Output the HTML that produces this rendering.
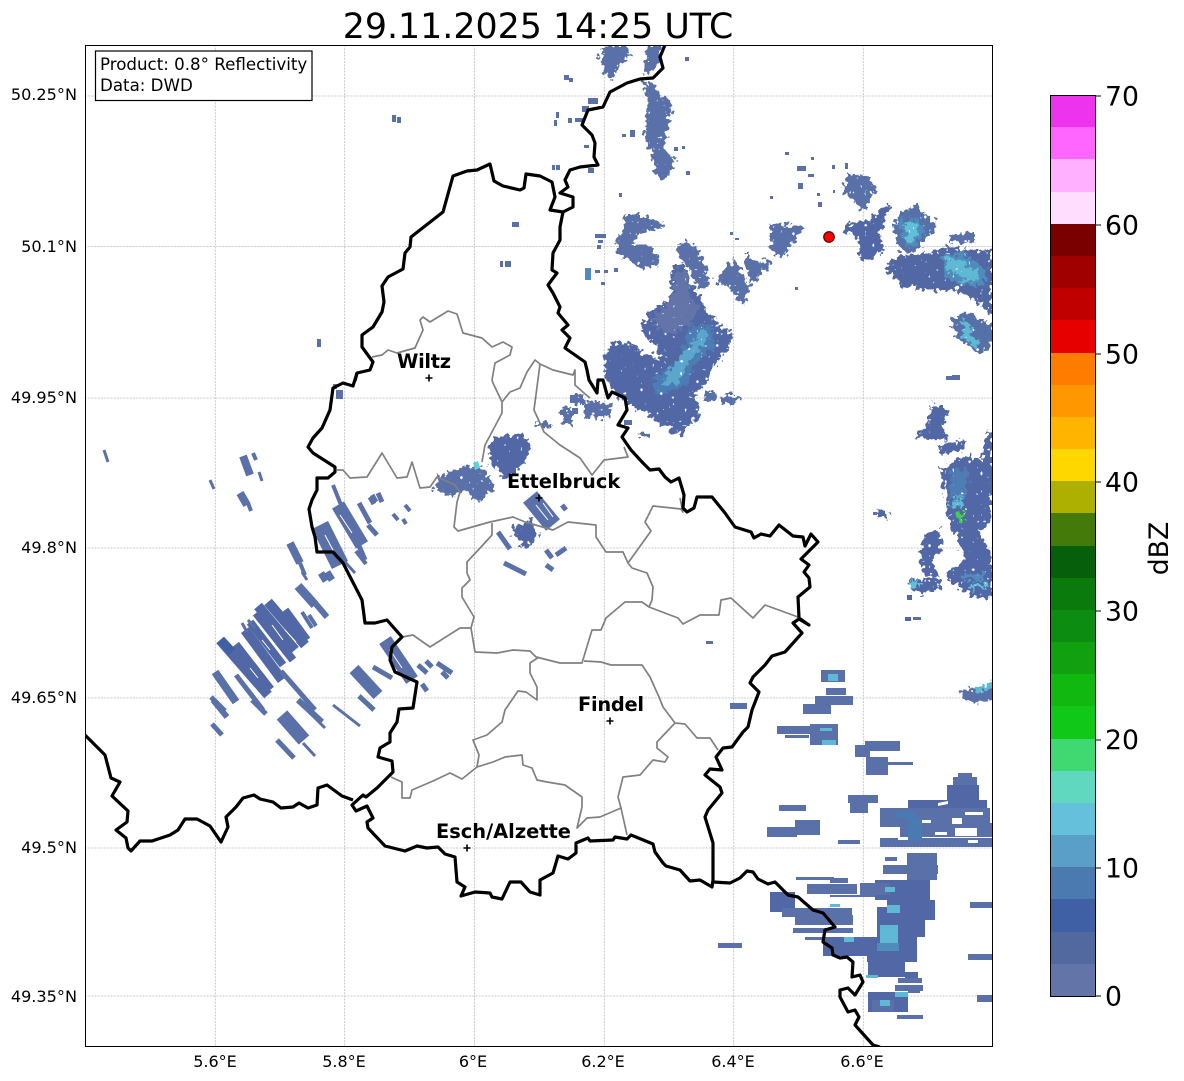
<!DOCTYPE html>
<html><head><meta charset="utf-8"><title>Radar</title>
<style>html,body{margin:0;padding:0;background:#fff}svg{display:block}text{font-family:"DejaVu Sans","Liberation Sans",sans-serif;fill:#000}</style>
</head><body>
<svg width="1184" height="1081" viewBox="0 0 1184 1081" xmlns="http://www.w3.org/2000/svg">
<defs>
<clipPath id="ax"><rect x="85" y="45" width="907" height="1001"/></clipPath>
<filter id="j" filterUnits="userSpaceOnUse" x="0" y="0" width="1184" height="1081" color-interpolation-filters="sRGB">
<feTurbulence type="fractalNoise" baseFrequency="0.2" numOctaves="2" seed="4" result="n"/>
<feDisplacementMap in="SourceGraphic" in2="n" scale="14" xChannelSelector="R" yChannelSelector="G" result="d"/>
<feTurbulence type="fractalNoise" baseFrequency="0.25" numOctaves="1" seed="9"/>
<feColorMatrix type="matrix" values="0 0 0 0 0 0 0 0 0 0 0 0 0 0 0 16 0 0 0 -3.8" result="m"/>
<feComposite in="d" in2="m" operator="in"/>
</filter>
</defs>
<rect width="1184" height="1081" fill="#fff"/>
<text x="538" y="38" font-size="34.8" text-anchor="middle">29.11.2025 14:25 UTC</text>
<g clip-path="url(#ax)">
<!-- grid -->
<g stroke="#bbb" stroke-width="0.8" stroke-dasharray="2 1.2" fill="none">
<path d="M215.3 45V1046M344.7 45V1046M474.5 45V1046M604.3 45V1046M733.7 45V1046M863.3 45V1046"/>
<path d="M85 96H992M85 246.5H992M85 398H992M85 548H992M85 698H992M85 848H992M85 996H992"/>
</g>
<!-- north-east jagged rain -->
<g filter="url(#j)">
<g fill="#5a70a8">
<path d="M600 47H628L630 55 618 65 612 80 605 75 600 62Z"/>
<path d="M648 45H662L660 60 652 72 643 75Z"/>
<path d="M643 80L655 85 660 95 673 103 668 125 665 150 675 160 672 172 663 180 656 175 650 150 645 135 648 110Z"/>
<path d="M625 212L640 215 665 225 650 232 638 232 633 245 650 245 660 262 645 270 620 255 615 245 622 230Z"/>
<path d="M733 258L750 285 745 305 738 300 730 288 715 282 718 278 730 262Z"/>
<path d="M745 252L755 262 772 260 757 283 750 280 745 265Z"/>
<path d="M770 223L790 225 802 228 795 240 785 255 775 255 770 245Z"/>
<path d="M847 172L870 178 876 190 868 205 860 212 850 195 843 195Z"/>
<path d="M683 240L695 245 705 268 710 285 700 290 690 270 675 250Z"/>
<path d="M704 392h12v10h-12zM722 395h16v9h-16zM585 402h26v16h-26zM562 408h10v16h-10zM574 394h10v10h-10zM536 423h14v4h-14zM640 433h10v5h-10z"/>
<path d="M437 478L453 470 470 465 465 490 452 497 435 490Z"/>
<path d="M470 465L485 470 495 485 480 503 465 490Z"/>
</g>
<path fill="#5268a6" d="M490 440L520 432 533 445 520 470 505 478 490 465Z"/>
<path fill="#5268a6" d="M515 525L530 520 540 535 525 548 513 535Z"/>
<path fill="#5268a6" d="M672 265H685L690 285 700 295 705 310 718 325 730 330 732 345 715 365 705 385 695 395 700 415 680 435 660 425 640 410 620 400 605 375 603 355 615 343 635 345 645 355 660 362 655 345 640 330 650 312 670 298Z"/>
<path fill="#6274a8" d="M675 270L685 272 690 295 700 310 690 325 665 335 650 320 672 300Z"/>
<path fill="#4b7cb4" d="M690 325L712 325 715 345 695 365 685 385 660 395 650 385 665 370 680 360Z"/>
<path fill="#5aa6cc" d="M703 328L708 340 688 362 676 384 660 388 668 372 685 352Z"/>
<path fill="#5268a6" d="M845 225L870 220 880 208 893 205 885 220 880 235 885 250 870 260 858 258 860 240 845 232Z"/>
<path fill="#5670a8" d="M893 218L915 205 925 215 938 225 925 240 915 252 900 250 895 235Z"/>
<path fill="#4f8cbc" d="M897 222L918 218 925 233 913 248 903 240Z"/>
<path fill="#5fc0d8" d="M905 222L915 222 918 235 910 243 906 235Z"/>
<path fill="#5268a4" d="M885 268L900 255 920 255 945 247 965 250 992 250V317L975 300 955 290 925 290 900 285Z"/>
<path fill="#4f8cbc" d="M940 256L962 252 985 270 985 285 960 285 945 275Z"/>
<path fill="#5fb8d4" d="M945 258L960 260 978 272 975 282 960 278 948 268Z"/>
<path fill="#5670a8" d="M950 322L965 310 992 325V345L978 355 960 340Z"/>
<path fill="#5fb8d4" d="M962 318L972 324 968 335 980 340 976 350 964 338Z"/>
<path fill="#5a70a8" d="M950 235L975 233V242L950 243Z"/>
<!-- right side -->
<g fill="#5268a6">
<path d="M930 405L950 410 942 425 948 440 915 438 930 420Z"/>
<path d="M938 445L966 440 962 452 940 453Z"/>
<path d="M940 470L965 455 982 460 985 435 992 432V520L980 530 992 560V598L970 595 955 585 945 575 965 560 955 535 948 515 945 490Z"/>
<path d="M923 535L940 530 942 550 930 560 940 578 925 575 920 560Z"/>
<path d="M907 580L940 577 940 590 915 593Z"/>
</g>
<path fill="#5fb8d4" d="M950 500h12v8h-12zM956 495h10v4h-10z"/>
<path fill="#4f8cbc" d="M950 470h18v28h-18z" opacity=".6"/>
<path fill="#3fcf4f" d="M957 512h8v8h-8z"/>
<path fill="#5fc0d8" d="M910 581h10v6h-10zM972 583h14v6h-14z"/>
<path fill="#4f8cbc" d="M963 574h22v6h-22z"/>
<path fill="#5268a6" d="M877 510h11v7h-11z"/>
<path fill="#5a70a8" d="M960 690L975 688 992 683V700L975 703 962 698Z"/>
<path fill="#5fb8d4" d="M975 688L992 682V688L978 692Z"/>
</g>
<!-- specks -->
<g fill="#5a70a8">
<rect x="392" y="115" width="4" height="7"/><rect x="397" y="117" width="4" height="6"/><rect x="512" y="222" width="7" height="5"/><rect x="500" y="261" width="3" height="6"/><rect x="505" y="261" width="6" height="6"/><rect x="317" y="339" width="4" height="8"/>
<rect x="564" y="75" width="5" height="5"/><rect x="569" y="78" width="4" height="4"/><rect x="685" y="57" width="4" height="4"/><rect x="556" y="112" width="3" height="6"/><rect x="554" y="120" width="3" height="6"/><rect x="568" y="118" width="4" height="5"/><rect x="575" y="118" width="8" height="4"/><rect x="582" y="106" width="7" height="6"/><rect x="588" y="98" width="10" height="6"/><rect x="584" y="145" width="5" height="3"/><rect x="552" y="165" width="3" height="5"/><rect x="556" y="165" width="4" height="5"/><rect x="588" y="168" width="6" height="5"/><rect x="619" y="193" width="3" height="4"/><rect x="630" y="130" width="5" height="7"/><rect x="622" y="134" width="4" height="3"/><rect x="674" y="147" width="4" height="4"/><rect x="682" y="146" width="3" height="3"/><rect x="686" y="171" width="4" height="4"/><rect x="595" y="234" width="11" height="4"/><rect x="598" y="240" width="5" height="3"/><rect x="597" y="245" width="4" height="4"/><rect x="595" y="270" width="5" height="3"/><rect x="604" y="270" width="4" height="3"/><rect x="614" y="268" width="4" height="4"/><rect x="601" y="282" width="4" height="3"/>
<rect x="785" y="152" width="4" height="3"/><rect x="811" y="157" width="3" height="3"/><rect x="797" y="166" width="9" height="5"/><rect x="808" y="174" width="6" height="3"/><rect x="798" y="183" width="5" height="6"/><rect x="817" y="193" width="3" height="3"/><rect x="818" y="202" width="4" height="5"/><rect x="770" y="196" width="3" height="3"/><rect x="795" y="287" width="3" height="3"/><rect x="832" y="165" width="3" height="4"/><rect x="845" y="163" width="3" height="6"/><rect x="833" y="190" width="2" height="3"/><rect x="730" y="232" width="3" height="3"/><rect x="735" y="238" width="4" height="2"/><rect x="946" y="376" width="6" height="4"/><rect x="952" y="375" width="8" height="5"/><rect x="907" y="595" width="5" height="5" fill="#5268a6"/><rect x="913" y="617" width="8" height="3"/><rect x="905" y="617" width="6" height="4" fill="#5268a6"/><rect x="706" y="641" width="7" height="3"/><rect x="873" y="512" width="4" height="3"/><rect x="333" y="384" width="4" height="5"/><rect x="336" y="390" width="7" height="9"/>
</g>
<rect x="585" y="268" width="6" height="12" fill="#4f8cbc"/>
<!-- west streaks -->
<g stroke="#5a70a8" fill="none" stroke-linecap="butt">
<path stroke-width="3" d="M104 450L108 462M210 480L214 489M259 472L262 481"/>
<path stroke-width="8" d="M243 456L250 475M240 493L247 505"/>
<path stroke-width="4" d="M253 453L256 460M248 503L251 511M333 485L345 515M356 551L366 564M405 505L410 511M393 514L398 520M403 519L406 524"/>
<path stroke-width="14" d="M338 505L362 545"/>
<path stroke-width="5" d="M359 503L370 523M368 525L377 535M346 515L365 560M372 495L376 502M378 493L382 502M370 497L374 504"/>
<path stroke-width="18" d="M320 525L340 565"/>
<path stroke-width="3" d="M345 562L355 573M302 572L307 580"/>
<path stroke-width="8" d="M290 543L300 563"/>
<path stroke-width="4" d="M300 563L305 575"/>
<path stroke-width="7" d="M321 573L326 581M327 572L332 580"/>
<path stroke-width="9" d="M298 586L315 605"/>
<path stroke-width="6" d="M315 603L327 617"/>
<path stroke-width="4" d="M302 612L312 628M309 615L316 626"/>
<!-- big west cluster as parallel streaks -->
<path stroke-width="10" stroke="#5268a6" d="M268 602L305 645M258 606L295 650M220 640L268 695M235 645L270 690M245 630L282 680"/>
<path stroke-width="8" stroke="#5268a6" d="M285 610L307 640M256 613L293 660M250 622L283 665"/>
<path stroke-width="3" d="M242 623L247 632M248 620L255 628"/>
<path stroke-width="8" d="M215 672L236 702"/>
<path stroke-width="5" d="M236 675L263 710M281 671L315 710M211 697L225 711"/>
<path stroke-width="12" d="M354 669L378 695"/>
<path stroke-width="5" d="M373 667L392 678M359 696L374 710M252 700L266 714M277 740L294 758M422 684L427 691M418 665L427 673M426 661L432 667M437 663L452 673M442 672L448 678M212 724L222 735"/>
<path stroke-width="14" d="M385 640L412 680"/>
<path stroke-width="6" d="M213 700L227 717"/>
<path stroke-width="14" d="M282 715L304 740"/>
<path stroke-width="3" d="M303 743L315 756M307 710L325 728M333 705L360 726"/>
<path stroke-width="6" d="M298 700L322 722"/>
<path stroke-width="5" d="M498 532L510 549M546 550L552 558M556 555L566 548M504 563L526 574M546 565L553 570M562 505L566 510"/>
<path stroke-width="18" d="M530 497L553 525"/>
<path stroke="#4060a6" stroke-width="9" d="M221 640L232 652"/>
<path stroke="#fff" stroke-width="1" d="M272 625L283 640M262 640L270 650M250 668L258 678M285 630L296 642M340 515L352 533M325 535L334 552M536 505L548 520M543 503L553 517M390 650L402 668"/>
</g>
<g fill="#5a70a8">
<path d="M624 420h8v5h-8zM570 395h8v8h-8zM572 408h6v6h-6zM560 410h6v5h-6z"/>
</g>
<path fill="#5fd0d8" d="M473 463l5-2 2 7-5 2z"/>
<!-- south-east bands -->
<g fill="#5a70a8">
<rect x="730" y="703" width="17" height="6"/><rect x="821" y="670" width="24" height="12"/><rect x="826" y="688" width="20" height="7"/><rect x="803" y="704" width="28" height="10"/><rect x="815" y="696" width="38" height="9"/>
<rect x="777" y="726" width="40" height="8"/><rect x="785" y="735" width="24" height="3"/><rect x="810" y="724" width="28" height="21"/>
<rect x="855" y="745" width="15" height="12"/><rect x="865" y="741" width="35" height="10"/><rect x="866" y="757" width="22" height="18"/><rect x="885" y="762" width="28" height="3"/>
<rect x="779" y="805" width="27" height="6"/><rect x="767" y="827" width="30" height="10"/><rect x="795" y="820" width="25" height="15"/>
<rect x="838" y="840" width="22" height="4"/><rect x="848" y="795" width="30" height="8"/><rect x="850" y="803" width="18" height="10"/>
<rect x="953" y="777" width="24" height="10"/><rect x="947" y="785" width="32" height="18" fill="#5268a6"/><rect x="908" y="800" width="79" height="13" fill="#5268a6"/><rect x="880" y="808" width="110" height="19"/><rect x="900" y="823" width="92" height="14"/><rect x="880" y="838" width="112" height="9"/><rect x="958" y="773" width="14" height="5"/>
<path fill="#fff" d="M938 803l10-2v3l-10 2zM952 818h10v6h-10zM955 828h22v8h-22zM968 840h10v3h-10zM920 820h11v3h-11zM935 832h12v3h-12zM965 812h18v3h-18zM898 838h14v2h-14z"/>
<path fill="#4a7ab2" d="M908 818h14v22h-14zM895 812h20v6h-20z"/>
<rect x="907" y="853" width="30" height="27"/><rect x="883" y="865" width="55" height="9"/><rect x="885" y="857" width="12" height="4"/>
<rect x="796" y="877" width="38" height="3"/><rect x="807" y="884" width="50" height="10"/><rect x="830" y="878" width="18" height="5"/>
<g fill="#5268a6"><rect x="875" y="880" width="55" height="20"/><rect x="887" y="900" width="48" height="20"/><rect x="877" y="907" width="48" height="30"/><rect x="867" y="937" width="50" height="25"/><rect x="868" y="962" width="37" height="15"/><rect x="905" y="972" width="13" height="11"/></g>
<rect x="770" y="892" width="25" height="20" fill="#5268a6"/><rect x="782" y="908" width="70" height="9"/><rect x="795" y="915" width="58" height="10"/><rect x="793" y="928" width="60" height="5"/><rect x="805" y="937" width="20" height="3"/><rect x="823" y="937" width="55" height="19" fill="#5268a6"/><rect x="860" y="883" width="30" height="12"/><rect x="830" y="895" width="45" height="2"/>
<rect x="868" y="992" width="40" height="20" fill="#5268a6"/><rect x="895" y="985" width="28" height="6"/><rect x="908" y="990" width="12" height="3"/><rect x="872" y="1000" width="22" height="12"/>
<rect x="897" y="1015" width="26" height="4"/><rect x="718" y="943" width="24" height="5"/><rect x="970" y="902" width="22" height="6"/><rect x="968" y="954" width="24" height="6"/><rect x="977" y="995" width="15" height="7"/>
<rect x="898" y="978" width="24" height="5"/>
</g>
<g fill="#5fb8d4">
<rect x="820" y="728" width="12" height="3"/><rect x="822" y="740" width="14" height="5"/><rect x="828" y="674" width="10" height="7"/>
<rect x="880" y="925" width="18" height="18"/><rect x="887" y="905" width="13" height="8"/><rect x="885" y="887" width="10" height="5"/><rect x="844" y="937" width="10" height="5"/><rect x="866" y="975" width="12" height="3"/>
<rect x="895" y="992" width="13" height="5"/><rect x="880" y="1000" width="10" height="6"/><rect x="830" y="904" width="10" height="3"/>
</g>
<rect x="877" y="943" width="22" height="8" fill="#4f8cbc"/>
<!-- grey borders -->
<g fill="none" stroke="#808080" stroke-width="1.7" stroke-linejoin="round">
<path d="M337 470L343 470 350 478 367 477 382 453 397 478 407 477 412 462 420 488 430 487 437 477 455 485 460 492 457 502 454 527 458 531 490 522 513 517 525 522 553 530 568 522 596 525 596 537 606 552 623 552 628 563 632 568 647 573 653 587 652 600 649 607"/>
<path d="M372 357L382 355 388 350 397 353 415 348 423 330 420 320 423 317 430 322 448 311 457 314 463 333 482 338 492 347 503 342 512 347 510 355 495 363 492 380 493 383 502 402 502 413 493 430 485 445 482 462"/>
<path d="M502 402L510 392 520 388 527 372 535 360 540 364 553 370 573 375 575 370 575 385 584 393 590 398"/>
<path d="M540 364L534 410 544 432 560 445 580 458 592 475 604 460 628 457 624 447"/>
<path d="M492 523L492 535 481 547 467 562 467 573 470 580 462 588 462 597 474 617 471 628 460 628 430 647 413 635 402 637"/>
<path d="M471 628L475 652 497 653 513 650 530 651 536 657 560 663 582 663 592 630 601 630 606 618 625 602 642 602 649 607 678 618 683 624 700 615 719 615 721 600 731 598 753 618 765 605 798 617"/>
<path d="M628 563L651 531 645 522 653 506 681 509 683 512 680 498"/>
<path d="M584 661L601 662 611 665 642 665 650 677 659 697 663 707 675 723 685 724 697 738 710 738 718 750"/>
<path d="M675 723L657 742 657 748 668 757 665 762 653 760 640 775 623 777 618 797 621 808 627 835"/>
<path d="M621 808L600 817 587 818 577 828 582 807 582 797 565 785 547 782 537 780 532 768 523 765 522 755 505 757 493 762 477 767 462 779 450 773 433 781 412 790 410 798 402 798 402 782 391 777"/>
<path d="M477 767L479 755 473 740 487 735 502 722 505 710 518 691 526 692 537 700 537 687 530 673 530 663 539 657"/>
</g>
<!-- black borders -->
<g fill="none" stroke="#000" stroke-width="3.2" stroke-linejoin="round">
<path d="M85 735L105 755 111 778 120 782 112 796 128 811 127 822 116 830 126 838 128 848 131 851 140 841 152 841 170 835 178 830 185 819 197 819 210 826 221 842 228 827 226 817 236 807 243 798 254 795 260 799 273 802 281 808 293 807 299 803 308 808 317 805 318 788 327 785 342 796 353 800"/>
<path d="M355 381L357 373 370 370 373 362 362 347 362 335 373 327 382 312 384 302 382 286 388 277 403 269 405 253 410 247 411 237 443 212 453 176 467 171 477 170 490 164 494 181 503 186 520 190 524 188 526 174 540 176 552 182 555 197 550 210 563 212"/>
<path d="M665 45L660 57 663 68 653 78 640 79 627 83 610 92 603 107 588 110 582 125 592 135 595 143 594 157 598 165 580 167 570 170 565 180 568 187 560 193 573 197 573 207 563 212 560 227 560 240 553 253 552 270 557 273 548 285 553 293 560 307 558 313 568 325 562 330 570 338 565 348 585 362 587 370 589 380 597 393 598 380 603 380 608 398 612 392 625 398 627 410 618 425 628 428 622 437 631 450 643 463 650 470 659 469 665 477 671 482 679 478 684 495 683 508 687 512 694 508 697 497 712 497 725 513 735 527 751 532 754 538 761 534 770 536 779 525 793 536 803 537 805 546 811 534 818 542 801 559 809 565 804 572 809 578 810 587 798 597 799 618 809 625 799 619 793 623 802 633 785 652 772 656 765 665 753 677 750 683 759 692 752 710 748 727 743 732 732 747 723 748 716 757 722 770 710 769 705 775 720 787 722 793 708 810 705 817 713 843 713 880 712 887 700 880 690 881 680 870 666 866 663 863 655 852 653 844 631 835 627 839 615 837 613 840 590 841 588 838 576 843 576 853 568 859 558 856 553 873 540 880 540 895 530 892 521 882 510 882 502 899 492 897 490 893 475 892 461 896 465 887 457 882 455 857 445 854 438 847 427 848 417 846 405 851 385 846 368 828 367 822 373 818 367 806 356 811 352 805 363 795 366 797 377 788 393 772 392 761 378 757 380 748 390 742 390 733 397 722 399 709 413 708 417 682 395 672 390 660 392 647 402 637 387 620 375 623 365 623 362 600 343 563 333 552 317 552 315 537 312 527 309 509 312 500 317 490 317 478 328 478 335 472 335 467 313 453 308 447 313 438 322 428 330 410 333 388 343 383 353 386 357 373"/>
<path d="M713 882L730 883 740 878 747 871 753 872 758 879 768 884 775 882 788 895 798 897 813 910 823 913 835 927 825 930 823 942 832 948 833 955 840 958 847 957 853 962 852 977 860 975 863 982 855 995 848 988 840 990 840 997 848 1012 855 1010 859 1017 855 1025 873 1045 880 1047"/>
</g>
<!-- markers -->
<g stroke="#000" stroke-width="1.6" fill="none">
<path d="M425.5 378h7M429 374.5v7M535.5 498h7M539 494.5v7M606.5 721h7M610 717.5v7M463.5 848h7M467 844.5v7"/>
</g>
<circle cx="829" cy="237" r="5.3" fill="#f00" stroke="#400" stroke-width="1.1"/>
<g font-weight="700" font-size="19.4">
<text x="397" y="368" textLength="54">Wiltz</text>
<text x="507" y="488">Ettelbruck</text>
<text x="578" y="711" textLength="66">Findel</text>
<text x="436" y="838">Esch/Alzette</text>
</g>
<rect x="95.5" y="51" width="216.5" height="49.5" fill="#fff" stroke="#000" stroke-width="1.2"/>
<text x="100" y="70" font-size="16.67">Product: 0.8° Reflectivity</text>
<text x="100" y="91" font-size="16.67">Data: DWD</text>
</g>
<rect x="85.5" y="45.5" width="907" height="1001" fill="none" stroke="#000" stroke-width="1"/>
<!-- axis labels -->
<g font-size="16" text-anchor="middle">
<text x="215" y="1067">5.6°E</text><text x="344" y="1067">5.8°E</text><text x="473" y="1067">6°E</text><text x="603" y="1067">6.2°E</text><text x="733" y="1067">6.4°E</text><text x="862" y="1067">6.6°E</text>
</g>
<g font-size="16.1" text-anchor="end">
<text x="77" y="100">50.25°N</text><text x="77" y="252">50.1°N</text><text x="77" y="403">49.95°N</text><text x="77" y="553">49.8°N</text><text x="77" y="703">49.65°N</text><text x="77" y="853">49.5°N</text><text x="77" y="1002">49.35°N</text>
</g>
<!-- colorbar -->
<g shape-rendering="crispEdges">
<rect x="1051" y="96" width="45" height="33" fill="#ee33ee"/>
<rect x="1051" y="127" width="45" height="33" fill="#ff66ff"/>
<rect x="1051" y="159" width="45" height="33" fill="#ffb0ff"/>
<rect x="1051" y="192" width="45" height="33" fill="#ffddff"/>
<rect x="1051" y="224" width="45" height="33" fill="#7a0000"/>
<rect x="1051" y="256" width="45" height="33" fill="#a00000"/>
<rect x="1051" y="288" width="45" height="33" fill="#c00000"/>
<rect x="1051" y="320" width="45" height="33" fill="#e60000"/>
<rect x="1051" y="353" width="45" height="33" fill="#ff7c00"/>
<rect x="1051" y="385" width="45" height="33" fill="#ff9800"/>
<rect x="1051" y="417" width="45" height="33" fill="#ffb400"/>
<rect x="1051" y="449" width="45" height="33" fill="#ffd700"/>
<rect x="1051" y="481" width="45" height="33" fill="#adb000"/>
<rect x="1051" y="513" width="45" height="33" fill="#447a0a"/>
<rect x="1051" y="546" width="45" height="33" fill="#065f0a"/>
<rect x="1051" y="578" width="45" height="33" fill="#0a7a0c"/>
<rect x="1051" y="610" width="45" height="33" fill="#0c8c10"/>
<rect x="1051" y="642" width="45" height="33" fill="#10a010"/>
<rect x="1051" y="674" width="45" height="33" fill="#10b810"/>
<rect x="1051" y="706" width="45" height="33" fill="#10c818"/>
<rect x="1051" y="739" width="45" height="33" fill="#40d870"/>
<rect x="1051" y="771" width="45" height="33" fill="#60d8c0"/>
<rect x="1051" y="803" width="45" height="33" fill="#65c0dc"/>
<rect x="1051" y="835" width="45" height="33" fill="#5a9fc8"/>
<rect x="1051" y="867" width="45" height="33" fill="#4a7ab0"/>
<rect x="1051" y="899" width="45" height="33" fill="#4060a6"/>
<rect x="1051" y="932" width="45" height="32" fill="#5269a0"/>
<rect x="1051" y="964" width="45" height="32" fill="#6375a8"/>
<rect x="1050.5" y="95.5" width="45" height="901" fill="none" stroke="#000" stroke-width="1"/>
<path d="M1096 96h5M1096 225h5M1096 354h5M1096 482h5M1096 611h5M1096 740h5M1096 868h5M1096 996h5" stroke="#000" stroke-width="1"/>
</g>
<g font-size="26.67">
<text x="1105" y="105.7">70</text><text x="1105" y="234.7">60</text><text x="1105" y="363.3">50</text><text x="1105" y="491.7">40</text><text x="1105" y="620.3">30</text><text x="1105" y="749.2">20</text><text x="1105" y="877.7">10</text><text x="1105" y="1005.7">0</text>
</g>
<text transform="translate(1168,548.5) rotate(-90)" font-size="26.67" text-anchor="middle">dBZ</text>
</svg>
</body></html>
